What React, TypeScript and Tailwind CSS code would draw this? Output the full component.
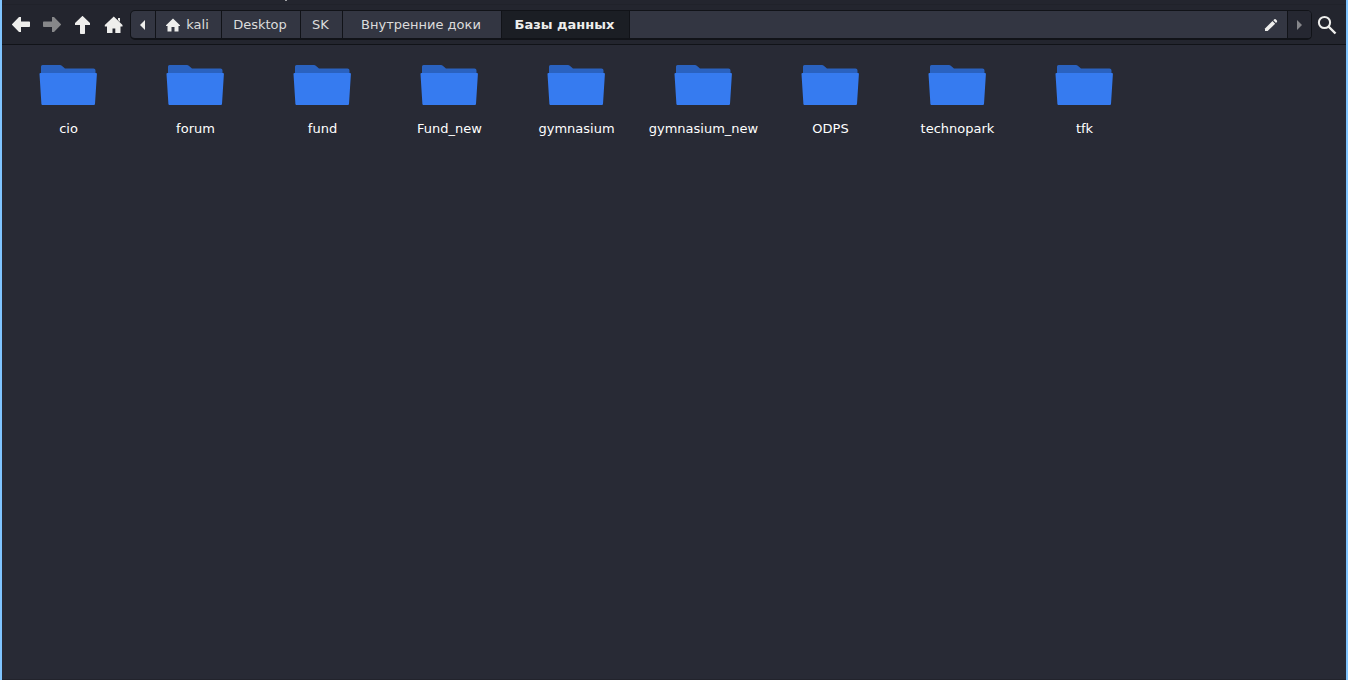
import { useState } from 'react';
import clsx from 'clsx';

const folders = [
  'cio',
  'forum',
  'fund',
  'Fund_new',
  'gymnasium',
  'gymnasium_new',
  'ODPS',
  'technopark',
  'tfk',
];

const crumbs = [
  { label: 'kali', width: 'w-[66px]', home: true },
  { label: 'Desktop', width: 'w-[79px]' },
  { label: 'SK', width: 'w-[42px]' },
  { label: 'Внутренние доки', width: 'w-[159px]' },
  { label: 'Базы данных', width: 'w-[128px]' },
];

export default function App() {
  const [current, setCurrent] = useState('Базы данных');

  return (
    <div className="flex min-h-screen flex-col border-x-2 border-[#7fc4ff] bg-[#282a35] font-['DejaVu_Sans',sans-serif] text-[13px] leading-4 text-[#eeeeec]">
      <header className="border-b border-[#111318] bg-[#23252e]">
        <MenuEdge />
        <nav aria-label="Location" className="flex h-[39px] items-center pt-px">
          <div className="flex shrink-0 pr-px pl-[3px]">
            <ToolButton label="Back">
              <BackIcon />
            </ToolButton>
            <ToolButton label="Forward" disabled>
              <ForwardIcon />
            </ToolButton>
            <ToolButton label="Up">
              <UpIcon />
            </ToolButton>
            <ToolButton label="Home">
              <HomeIcon />
            </ToolButton>
          </div>

          <div className="flex h-[30px] min-w-0 flex-1 overflow-hidden rounded-[5px] border border-b-2 border-[#111318] bg-[#333642]">
            <button type="button" aria-label="Scroll path left" className="flex w-[25px] shrink-0 items-center justify-center border-r border-[#111318]">
              <svg width="6" height="10" viewBox="0 0 6 10" fill="currentColor">
                <path d="M5 0v10L0 5z" />
              </svg>
            </button>
            {crumbs.map((crumb) => (
              <button
                key={crumb.label}
                type="button"
                onClick={() => setCurrent(crumb.label)}
                className={clsx(
                  'flex shrink-0 items-center justify-center gap-1.5 whitespace-nowrap border-r border-[#111318] pr-0.5',
                  crumb.width,
                  current === crumb.label ? 'bg-[#1b1e24] font-bold' : 'text-[#dcdcdc]',
                )}
              >
                {crumb.home && <SmallHomeIcon />}
                {crumb.label}
              </button>
            ))}
            <div className="flex flex-1 items-center justify-end border-r border-[#111318] pr-2">
              <button type="button" aria-label="Edit path" className="text-[#eeeeec]">
                <PencilIcon />
              </button>
            </div>
            <button type="button" disabled aria-label="Scroll path right" className="flex w-[23px] shrink-0 items-center justify-center bg-[#252731] text-[#85868a]">
              <svg width="6" height="10" viewBox="0 0 6 10" fill="currentColor">
                <path d="M0 0v10l5-5z" />
              </svg>
            </button>
          </div>

          <button type="button" aria-label="Search" className="flex w-[34px] shrink-0 items-center justify-center pr-1">
            <SearchIcon />
          </button>
        </nav>
      </header>

      <main className="flex-1 border-b border-[#22232c] px-[3px] pt-4">
        <ul className="grid grid-cols-[repeat(auto-fill,127px)]">
          {folders.map((name) => (
            <li key={name}>
              <a href={`#${name}`} className="flex flex-col items-center gap-3 text-white">
                <FolderIcon />
                {name}
              </a>
            </li>
          ))}
        </ul>
      </main>
    </div>
  );
}

// Bottom edge of the menu bar that is scrolled out of view
function MenuEdge() {
  return (
    <div className="h-[5px] border-b border-[#20222a] pl-[283px]">
      <div className="h-px w-0.5 bg-[#a0a1a4]" />
    </div>
  );
}

function ToolButton({
  label,
  disabled,
  children,
}: {
  label: string;
  disabled?: boolean;
  children: React.ReactNode;
}) {
  return (
    <button
      type="button"
      aria-label={label}
      disabled={disabled}
      className="flex h-8 w-[31px] items-center justify-center disabled:text-[#868789]"
    >
      {children}
    </button>
  );
}

function BackIcon() {
  return (
    <svg width="20" height="20" viewBox="0 0 20 20" fill="currentColor">
      <path d="M1 9.300 8 2h2v4.500h8.200q.8 0 .8.8v3.900q0 .8-.8.800H10v5H8L1 9.700z" />
    </svg>
  );
}

function ForwardIcon() {
  return (
    <svg width="20" height="20" viewBox="0 0 20 20" fill="currentColor">
      <path d="M19 9.300 12 2h-2v4.500H1.800Q1 6.500 1 7.300v3.900q0 .8.8.8H10v5h2L19 9.700z" />
    </svg>
  );
}

function UpIcon() {
  return (
    <svg width="20" height="20" viewBox="0 0 20 20" fill="currentColor">
      <path d="M9.300 1 2 8v2h5v8.200q0 .8.8.8h3.400q.8 0 .8-.8V10h5V8L9.700 1z" />
    </svg>
  );
}

function HomeIcon() {
  return (
    <svg width="20" height="20" viewBox="0 0 20 20" fill="currentColor">
      <path d="M9.800 1.500.8 10v1.500H3V18h5.500v-4.500h2.800V18H16.500v-6.500h2V10z" />
      <path d="M14 3h2v4l-2-2z" />
    </svg>
  );
}

function SmallHomeIcon() {
  return (
    <svg width="14" height="14" viewBox="0 0 14 14" fill="#eeeeec">
      <path d="M7 .5 0 7.200V8h1.500v5.500h4V9h3v4.500h4V8H14v-.8z" />
    </svg>
  );
}

function PencilIcon() {
  return (
    <svg width="16" height="16" viewBox="0 0 16 16" fill="currentColor">
      <path d="M2 11.500 9.500 4l2.700 2.700L4.700 14H2z" />
      <path d="m10.300 3.200 1-.9q.7-.6 1.400 0l1.200 1.200q.6.7 0 1.400l-.9 1z" />
    </svg>
  );
}

function SearchIcon() {
  return (
    <svg width="20" height="20" viewBox="0 0 20 20" fill="none" stroke="currentColor">
      <circle cx="7.500" cy="7.500" r="5.600" strokeWidth="2" />
      <path d="m11.500 11.500 7 7" strokeWidth="2.400" />
    </svg>
  );
}

function FolderIcon() {
  return (
    <svg width="59" height="48" viewBox="0 0 59 48">
      <path d="M2 13V5.500Q2 4 3.500 4H21q1 0 1.800.7L26 7.500h28.500q2 0 2 2V13z" fill="#2a62c0" />
      <path d="M1.500 12h55.500q1 0 .9 1l-1.900 30q-.1 1-1.100 1H3.500q-1 0-1.100-1L.5 13q-.1-1 1-1z" fill="#367bf0" />
    </svg>
  );
}
